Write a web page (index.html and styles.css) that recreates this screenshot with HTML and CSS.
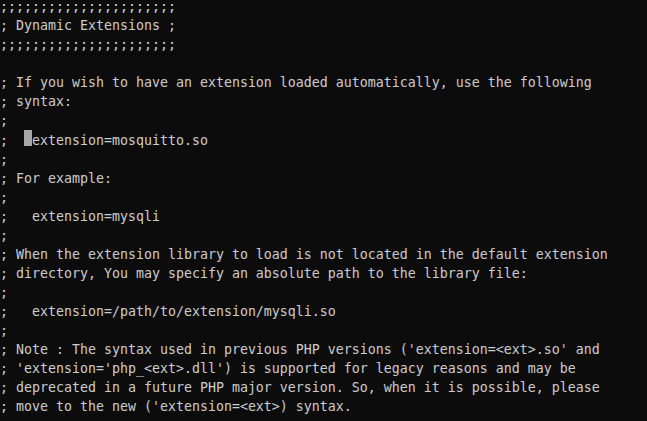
FILE: index.html
```html
<!DOCTYPE html>
<html>
<head>
<meta charset="utf-8">
<link rel="stylesheet" href="styles.css">
</head>
<body>
<pre class="term">;;;;;;;;;;;;;;;;;;;;;;
; Dynamic Extensions ;
;;;;;;;;;;;;;;;;;;;;;;

; If you wish to have an extension loaded automatically, use the following
; syntax:
;
;  <span class="cursor"></span>extension=mosquitto.so
;
; For example:
;
;   extension=mysqli
;
; When the extension library to load is not located in the default extension
; directory, You may specify an absolute path to the library file:
;
;   extension=/path/to/extension/mysqli.so
;
; Note : The syntax used in previous PHP versions ('extension=&lt;ext&gt;.so' and
; 'extension='php_&lt;ext&gt;.dll') is supported for legacy reasons and may be
; deprecated in a future PHP major version. So, when it is possible, please
; move to the new ('extension=&lt;ext&gt;) syntax.
</pre>
</body>
</html>
```
FILE: styles.css
```css
html, body {
  margin: 0;
  padding: 0;
  background: #0c0c0c;
  height: 100%;
  overflow: hidden;
}
.term {
  margin: -3px 0 0 0;
  padding: 0;
  font-family: "DejaVu Sans Mono", monospace;
  font-size: 13.29px;
  line-height: 19px;
  color: #cccccc;
  white-space: pre;
}
.cursor {
  display: inline-block;
  width: 8px;
  height: 16px;
  vertical-align: -1px;
  background: #a8a8a8;
}
```
